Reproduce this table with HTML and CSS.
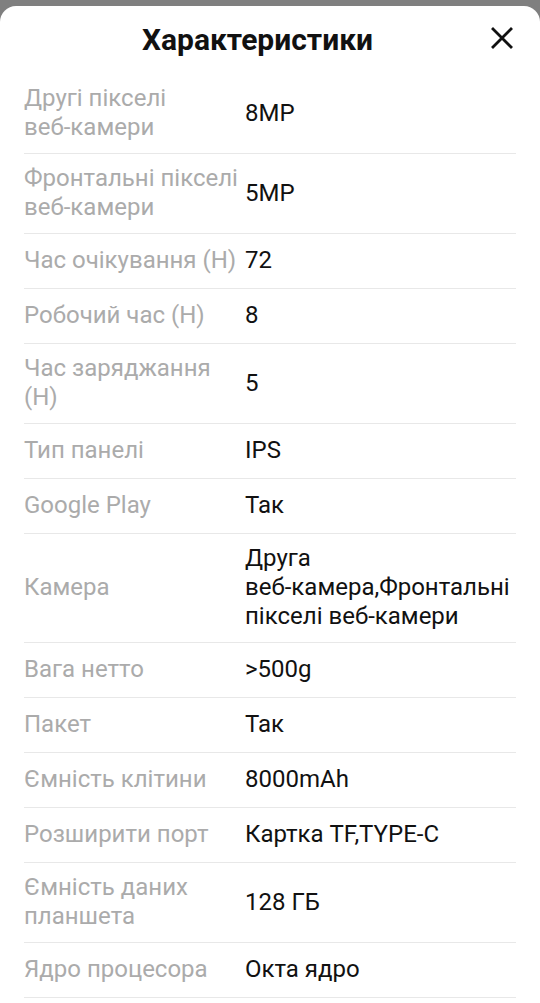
FILE: index.html
```html
<!DOCTYPE html>
<html lang="uk">
<head>
<meta charset="utf-8">
<link rel="stylesheet" href="styles.css">
</head>
<body>
<div class="sheet">
  <header class="header">
    <h1 class="title">Характеристики</h1>
    <button class="close" aria-label="close">
      <svg width="22" height="22" viewBox="0 0 22 22"><path d="M2 2 L20 20 M20 2 L2 20" stroke="#111" stroke-width="2.8" stroke-linecap="square" fill="none"/></svg>
    </button>
  </header>
  <div class="list">
    <div class="row"><div class="label">Другі пікселі <span class="nw">веб-камери</span></div><div class="value">8MP</div></div>
    <div class="row"><div class="label">Фронтальні пікселі <span class="nw">веб-камери</span></div><div class="value">5MP</div></div>
    <div class="row"><div class="label">Час очікування (Н)</div><div class="value">72</div></div>
    <div class="row"><div class="label">Робочий час (Н)</div><div class="value">8</div></div>
    <div class="row"><div class="label">Час заряджання (Н)</div><div class="value">5</div></div>
    <div class="row"><div class="label">Тип панелі</div><div class="value">IPS</div></div>
    <div class="row"><div class="label">Google Play</div><div class="value">Так</div></div>
    <div class="row"><div class="label">Камера</div><div class="value">Друга <span class="nw">веб-камера,Фронтальні</span> пікселі <span class="nw">веб-камери</span></div></div>
    <div class="row"><div class="label">Вага нетто</div><div class="value">&gt;500g</div></div>
    <div class="row"><div class="label">Пакет</div><div class="value">Так</div></div>
    <div class="row"><div class="label">Ємність клітини</div><div class="value">8000mAh</div></div>
    <div class="row"><div class="label">Розширити порт</div><div class="value">Картка TF,TYPE-C</div></div>
    <div class="row"><div class="label">Ємність даних планшета</div><div class="value">128 ГБ</div></div>
    <div class="row"><div class="label">Ядро процесора</div><div class="value">Окта ядро</div></div>
  </div>
</div>
</body>
</html>
```
FILE: styles.css
```css
html, body {
  margin: 0;
  padding: 0;
  background: #7f7f7f;
  height: 100%;
  overflow: hidden;
}
body {
  padding-top: 6px;
  box-sizing: border-box;
  font-family: Roboto, "Noto Sans", sans-serif;
}
.sheet {
  background: #fff;
  border-radius: 16px 16px 0 0;
  min-height: 100%;
}
.header {
  display: flex;
  align-items: center;
  height: 68px;
  padding: 0 24px;
}
.title {
  flex: 1;
  margin: 0;
  text-align: center;
  font-size: 30px;
  font-weight: 700;
  color: #111;
  line-height: 36px;
}
.close {
  border: 0;
  background: none;
  padding: 0;
  width: 22px;
  height: 22px;
  margin-top: -4px;
  margin-right: 3px;
  display: flex;
}
.list {
  padding: 0 24px;
}
.row {
  display: grid;
  grid-template-columns: 214px 1fr;
  column-gap: 7px;
  align-items: center;
  min-height: 55px;
  padding: 10px 0 11px;
  box-sizing: border-box;
  border-bottom: 1px solid #e8e8e8;
  font-size: 24px;
  line-height: 29px;
}
.nw {
  white-space: nowrap;
}
.label {
  color: #ababab;
}
.value {
  color: #111;
}
```
